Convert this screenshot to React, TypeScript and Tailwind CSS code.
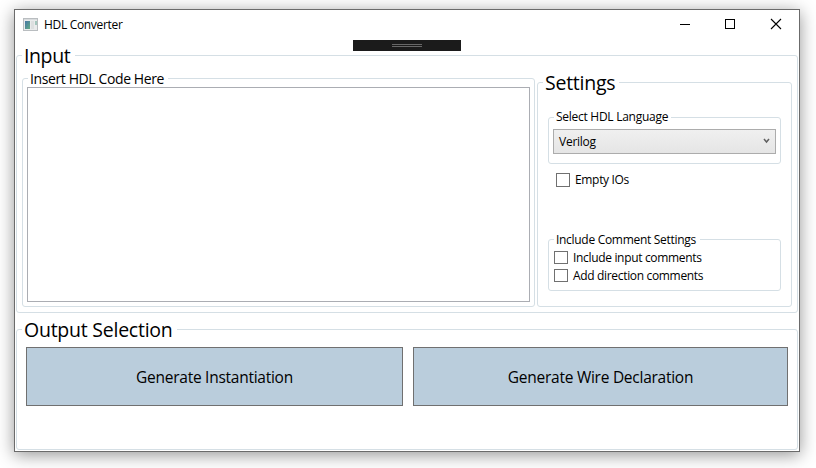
import type { ReactNode } from "react";

type GroupBoxProps = {
  className: string;
  legend: string;
  legendClass: string;
  children?: ReactNode;
};

function GroupBox({ className, legend, legendClass, children }: GroupBoxProps) {
  return (
    <section className={`rounded-[3px] border border-[#d5dfe5] ${className}`}>
      <h2 className={`bg-white whitespace-nowrap ${legendClass}`}>{legend}</h2>
      {children}
    </section>
  );
}

function CheckRow({ label, className, boxClass, textClass }: { label: string; className: string; boxClass: string; textClass: string }) {
  return (
    <label className={`flex items-center text-[12px] tracking-[-0.33px] whitespace-nowrap ${className}`}>
      <span className={`w-3.5 shrink-0 border border-[#707070] bg-white ${boxClass}`} />
      <span className={textClass}>{label}</span>
    </label>
  );
}

function TitleBar() {
  return (
    <header className="flex h-[30px] items-center">
      <svg className="mb-px ml-2 shrink-0" width="15" height="13" viewBox="0 0 15 13" shapeRendering="crispEdges">
        <defs>
          <linearGradient id="pane" x1="0" y1="0" x2="1" y2="1">
            <stop offset="0" stopColor="#4676a6" />
            <stop offset="1" stopColor="#62ab84" />
          </linearGradient>
        </defs>
        <rect width="15" height="13" fill="#b9bdc0" />
        <rect x="1" y="1" width="13" height="1" fill="#d9dcde" />
        <rect x="1" y="2" width="13" height="10" fill="#e9ebec" />
        <rect x="2" y="3" width="5" height="8" fill="url(#pane)" />
        <rect x="8" y="3" width="3" height="8" fill="#dcdfe0" />
        <rect x="12" y="3" width="2" height="4" fill="#a3c6bd" />
      </svg>
      <h1 className="ml-[6px] text-[12px] tracking-[-0.32px]">HDL Converter</h1>
      <svg className="mr-[15px] mb-[2px] ml-auto" width="104" height="12" viewBox="0 0 104 12" fill="none" stroke="#000">
        <path d="M0 6.5h10" shapeRendering="crispEdges" />
        <rect x="45.500" y="1.500" width="9" height="9" shapeRendering="crispEdges" />
        <path d="M91 1l10 10M101 1L91 11" strokeWidth="1.100" />
      </svg>
    </header>
  );
}

export default function App() {
  return (
    <main className="h-[468px] w-[816px] overflow-hidden bg-white pt-[9px] pl-[14px] font-['Open_Sans','Noto_Sans',sans-serif] text-black">
      <div className="h-[443px] w-[786px] border border-[#6b6b6b] bg-white shadow-[0_3px_16px_rgba(0,0,0,0.42)]">
        <TitleBar />
        <div className="ml-[338px] flex h-[11px] w-[108px] flex-col items-center gap-px bg-[#1b1b1b] pt-1">
          <span className="h-px w-[30px] bg-[#686868]" />
          <span className="h-px w-[30px] bg-[#686868]" />
        </div>

        <GroupBox
          className="mt-1 ml-px h-[258px] w-[782px]"
          legend="Input"
          legendClass="-mt-[14px] ml-[5px] h-[27px] w-[53px] pl-[2px] text-[19.500px] leading-[27px] tracking-[-0.4px]"
        >
          <div className="flex gap-[2px] pl-[5px]">
            <GroupBox
              className="mt-[9px] h-[229px] w-[513px]"
              legend="Insert HDL Code Here"
              legendClass="-mt-[9px] ml-[5px] h-[18px] w-[140px] pl-[2px] text-[14px] leading-[18px] tracking-[-0.39px]"
            >
              <textarea aria-label="HDL code" className="-mt-px ml-1 block h-[215px] w-[503px] resize-none border border-[#abadb3] bg-white" />
            </GroupBox>
            <GroupBox
              className="mt-[13px] h-[225px] w-[255px]"
              legend="Settings"
              legendClass="-mt-[14px] ml-[5px] h-[28px] w-[76px] pl-[2px] text-[19.500px] leading-[28px] tracking-[-0.25px]"
            >
              <GroupBox
                className="mt-5 ml-[10px] h-[47px] w-[233px]"
                legend="Select HDL Language"
                legendClass="-mt-[9px] ml-[5px] h-[17px] w-[117px] pl-[2px] text-[12px] leading-[16px] tracking-[-0.27px]"
              >
                <button className="mt-[3px] ml-1 flex h-[25px] w-[223px] items-center border border-[#acacac] bg-linear-to-b from-[#f0f0f0] to-[#e5e5e5] pl-[5px] text-[12px] tracking-[-0.25px]">
                  <span>Verilog</span>
                  <svg className="mr-[5px] mb-px ml-auto" width="7" height="6" viewBox="0 0 7 6" fill="none" stroke="#606060" strokeWidth="1.500">
                    <path d="M1 1l2.500 3L6 1" />
                  </svg>
                </button>
              </GroupBox>
              <CheckRow label="Empty IOs" className="mt-[9px] ml-[18px] h-[14px]" boxClass="h-3.5" textClass="ml-[5px]" />
              <GroupBox
                className="mt-[52px] ml-[10px] h-[52px] w-[233px]"
                legend="Include Comment Settings"
                legendClass="-mt-[9px] ml-[5px] h-[17px] w-[146px] pl-[2px] text-[12px] leading-[17px] tracking-[-0.3px]"
              >
                <CheckRow label="Include input comments" className="mt-[3px] ml-[5px] h-[13px]" boxClass="h-[13px]" textClass="ml-[5px]" />
                <CheckRow label="Add direction comments" className="mt-[5px] ml-[5px] h-[13px]" boxClass="h-[13px]" textClass="ml-[5px]" />
              </GroupBox>
            </GroupBox>
          </div>
        </GroupBox>

        <GroupBox
          className="mt-4 ml-px h-[121px] w-[782px]"
          legend="Output Selection"
          legendClass="-mt-[14px] ml-[5px] h-[28px] w-[155px] pl-[2px] text-[19.500px] leading-[28px] tracking-[-0.24px]"
        >
          <div className="mt-[3px] ml-[9px] flex gap-[10px] text-[15.500px] tracking-[-0.26px]">
            <button className="h-[59px] w-[377px] border border-[#707070] bg-[#bacddc] pt-[2px]">Generate Instantiation</button>
            <button className="h-[59px] w-[375px] border border-[#707070] bg-[#bacddc] pt-[2px]">Generate Wire Declaration</button>
          </div>
        </GroupBox>
      </div>
    </main>
  );
}
